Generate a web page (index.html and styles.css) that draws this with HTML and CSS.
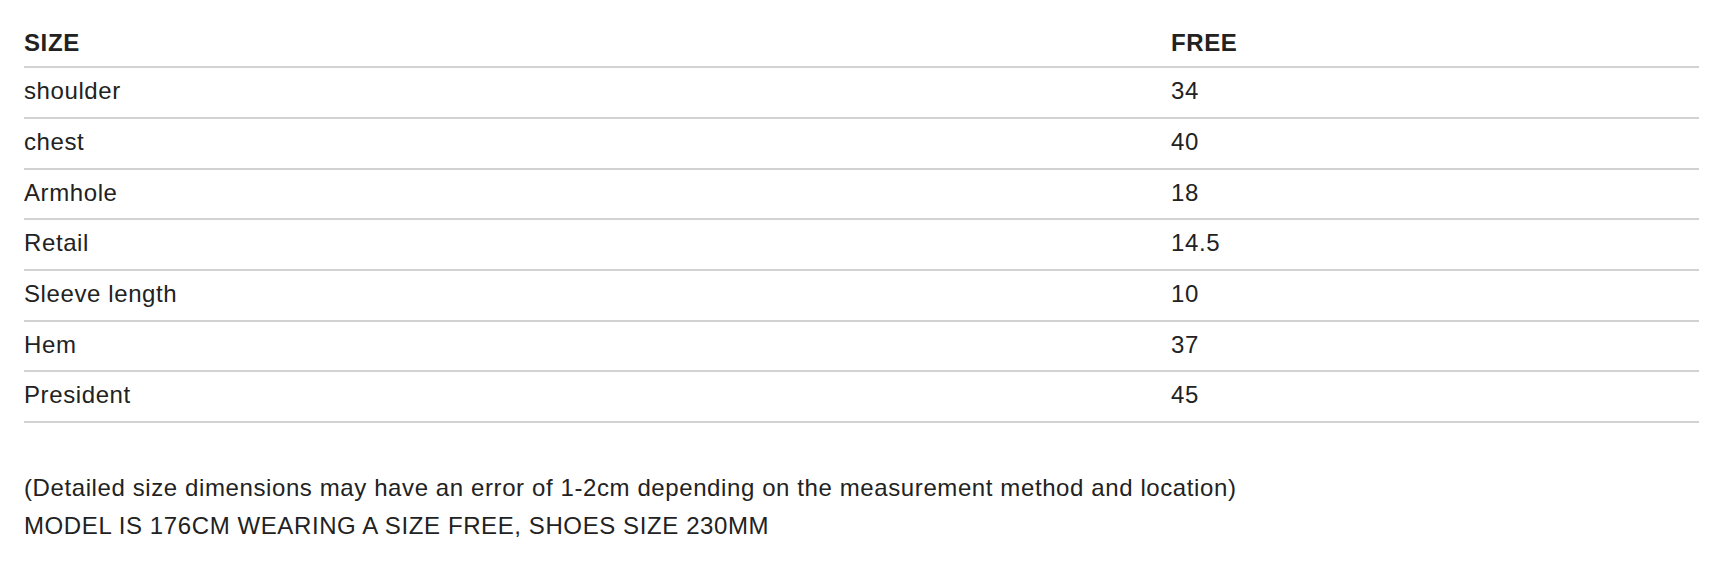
FILE: index.html
```html
<!DOCTYPE html>
<html>
<head>
<meta charset="utf-8">
<link rel="stylesheet" href="styles.css">
</head>
<body>
<div class="page">
  <table class="size-table">
    <thead>
      <tr><th class="col-name">SIZE</th><th>FREE</th></tr>
    </thead>
    <tbody>
      <tr><td>shoulder</td><td>34</td></tr>
      <tr><td>chest</td><td>40</td></tr>
      <tr><td>Armhole</td><td>18</td></tr>
      <tr><td>Retail</td><td>14.5</td></tr>
      <tr><td>Sleeve length</td><td>10</td></tr>
      <tr><td>Hem</td><td>37</td></tr>
      <tr><td>President</td><td>45</td></tr>
    </tbody>
  </table>
  <div class="notes">
    <p>(Detailed size dimensions may have an error of 1-2cm depending on the measurement method and location)</p>
    <p>MODEL IS 176CM WEARING A SIZE FREE, SHOES SIZE 230MM</p>
  </div>
</div>
</body>
</html>
```
FILE: styles.css
```css
html, body {
  margin: 0;
  padding: 0;
  background: #ffffff;
}
body {
  font-family: "Liberation Sans", Arial, Helvetica, sans-serif;
  font-size: 24px;
  letter-spacing: 0.6px;
  color: #222222;
}
.page {
  padding: 18px 27px 0 24px;
}
.size-table {
  width: 100%;
  border-collapse: collapse;
}
.size-table th,
.size-table td {
  text-align: left;
  padding: 10px 0 12.33px 0;
  line-height: 26.33px;
  border-bottom: 2px solid #d2d2d2;
  font-weight: normal;
}
.size-table th {
  font-weight: bold;
  padding: 12px 0 10px 0;
}
.col-name {
  width: 1147px;
}
.notes {
  padding-top: 46px;
}
.notes p {
  margin: 0;
  line-height: 38px;
}
```
